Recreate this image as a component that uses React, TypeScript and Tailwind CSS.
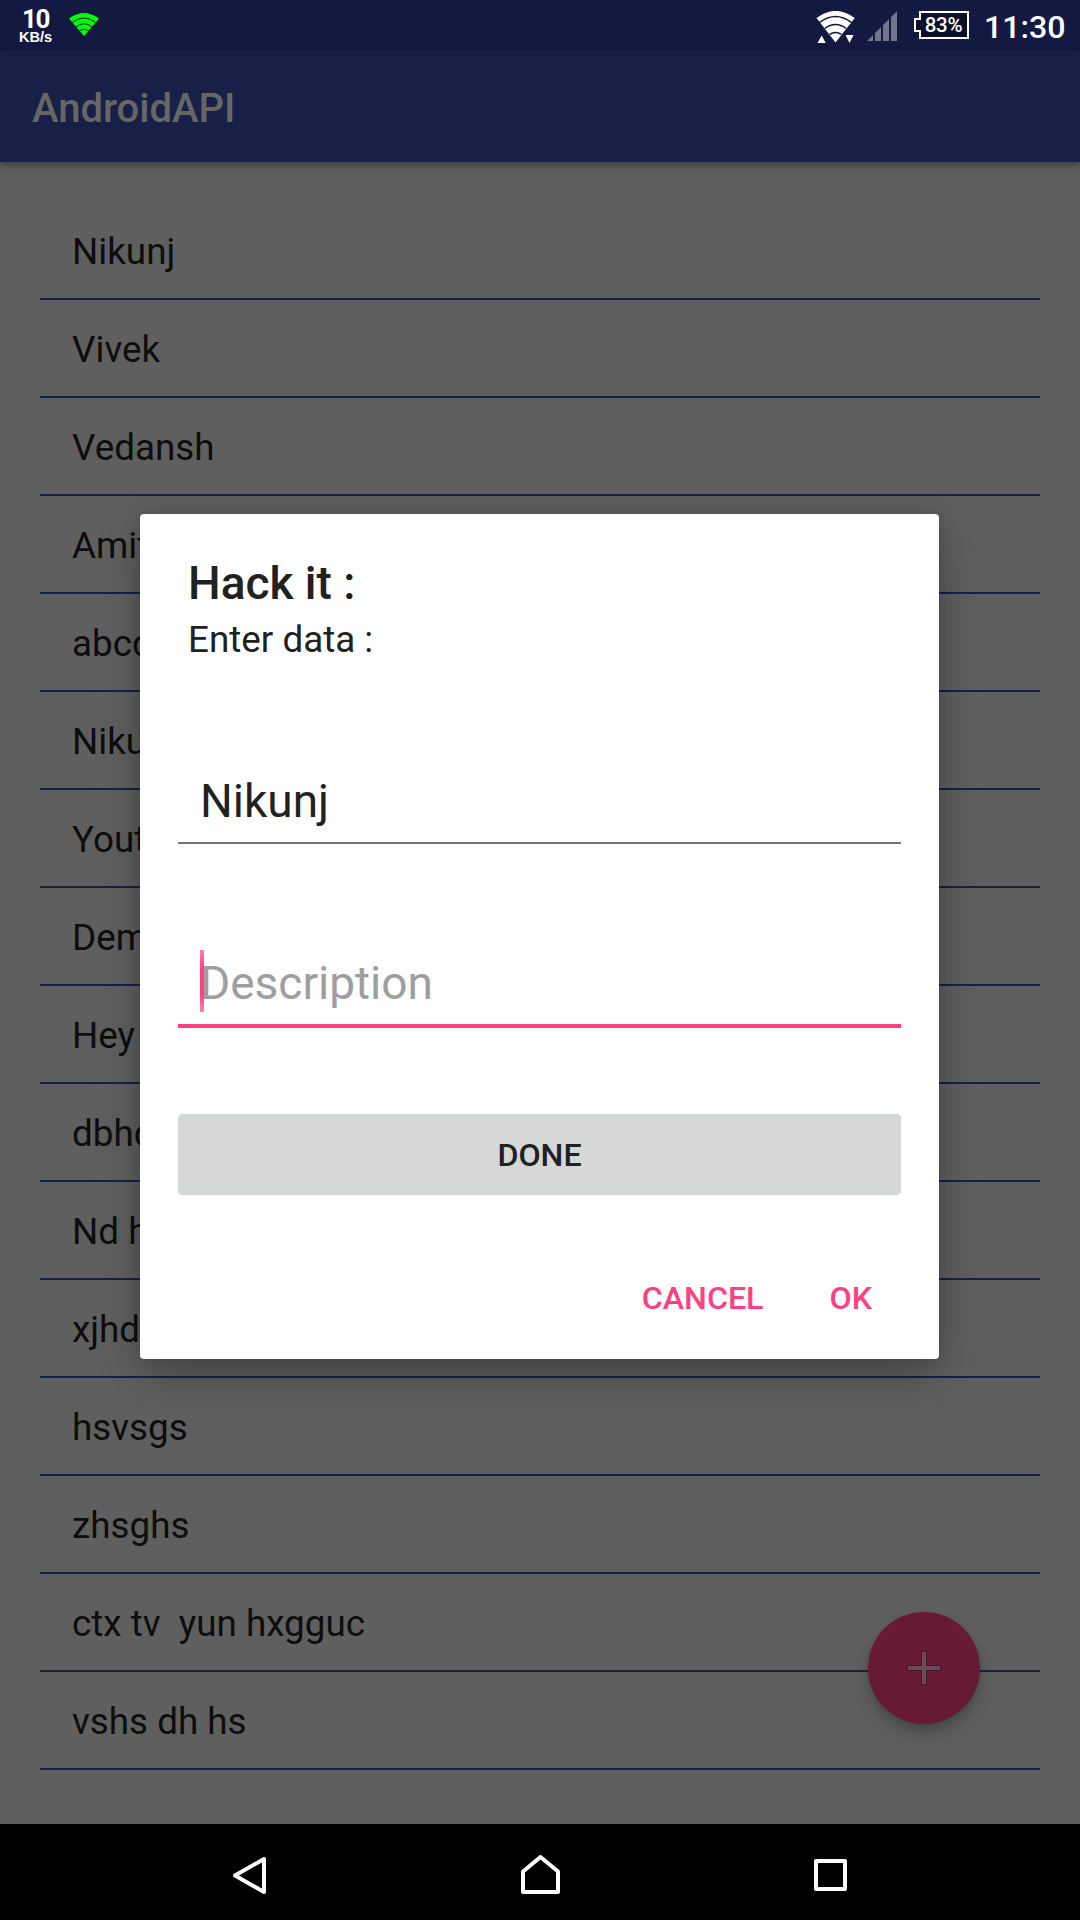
const names = [
  "Nikunj", "Vivek", "Vedansh", "Amit", "abcd", "Nikunj", "Youth", "Demo",
  "Hey", "dbhdh", "Nd hd", "xjhdh", "hsvsgs", "zhsghs", "ctx tv\u00a0 yun hxgguc", "vshs dh hs",
];

function StatusBar() {
  return (
    <header className="flex h-[50px] items-start justify-between bg-[#131940] text-white">
      <div className="flex items-start">
        <div className="ml-[18px] flex w-[35px] flex-col items-center font-['Roboto'] font-bold">
          <span className="mt-[8px] h-[22px] text-[26px] leading-[22px] font-bold tracking-[-1.5px]">10</span>
          <span className="h-[14px] font-['Liberation_Sans'] text-[14.6px] leading-[14px]">KB/s</span>
        </div>
        <svg className="mt-[13px] ml-[16px]" width="30" height="23" viewBox="0 0 30 23">
          <path d="M0 5.5Q15-5.5 30 5.5L15 23Z" fill="#00ff00" />
          <path d="M3.4 9.3Q15 .8 26.6 9.3M7 13.7Q15 7.8 23 13.7M10.5 17.8Q15 14.7 19.5 17.8" fill="none" stroke="#131940" strokeWidth="1" />
        </svg>
      </div>
      <div className="flex items-start">
        <svg className="mt-[11px]" width="40" height="32" viewBox="0 0 40 32" fill="#fff">
          <path d="M.5 7.1Q19.5-7.3 38.8 7.1L19.5 31.5Z" />
          <path d="M3.6 11.3Q19.5-.4 35.4 11.3M8.8 17.5Q19.5 9.7 30.2 17.5M13.6 23.4Q19.5 19.4 25.4 23.4" fill="none" stroke="#131940" strokeWidth="1.5" />
          <path d="M1.5 32 5.7 24.5 9.7 32ZM29.5 24H37.5L33.5 32Z" />
        </svg>
        <svg className="mt-[11px] ml-[10px]" width="31" height="31" viewBox="0 0 31 31" fill="#71758c">
          <path d="M1 30 7 24V30ZM9 22 15 16V30H9ZM17 14 23 8V30H17ZM25 6 31 0V30H25Z" />
        </svg>
        <div className="relative mt-[11px] ml-[17px] h-[28px] w-[55px]">
          <svg width="55" height="28" viewBox="0 0 55 28">
            <path d="M6 1H54V27H6V20H1V8H6Z" fill="#0b0f29" stroke="#fff" strokeWidth="2" />
          </svg>
          <span className="absolute inset-0 pl-[4px] text-center text-[20.5px] leading-[28px] font-medium tracking-[-0.3px]">83%</span>
        </div>
        <div className="mt-[8px] ml-[15px] w-[96px] text-[32.2px] leading-[38px] font-medium whitespace-nowrap">11:30</div>
      </div>
    </header>
  );
}

function Dialog() {
  return (
    <section className="absolute top-[514px] left-[140px] flex h-[845px] w-[799px] flex-col rounded-[4px] bg-white px-[38px] pt-[41px] text-[#212121] shadow-[0_16px_44px_rgba(0,0,0,0.28),0_0_16px_rgba(0,0,0,0.1)]">
      <h2 className="pl-[10px] text-[46px] leading-[56px] font-medium">Hack it :</h2>
      <p className="pl-[10px] text-[36.8px] leading-[58px]">Enter data :</p>
      <div className="mt-[102px] h-[73px] w-[723px] border-b-2 border-[#757575] pl-[22px] text-[46px] leading-[60px]">Nikunj</div>
      <div className="relative mt-[108px] h-[76px] w-[723px] border-b-4 border-[#ff4081] pl-[22px] text-[46px] leading-[62px] text-[#9e9e9e]">
        Description
        <span className="absolute top-[-2px] left-[22px] h-[62px] w-[4px] bg-[linear-gradient(#ff80ab,#ff4081_30%,#ff4081_70%,#ff80ab)]" />
      </div>
      <button className="mt-[86px] h-[81px] w-[723px] rounded-[5px] bg-[#d6d8d7] pt-px text-[32.2px] leading-[80px] font-medium shadow-[0_0_1px_rgba(0,0,0,0.25)]">DONE</button>
      <div className="mt-[65px] flex justify-end pr-[29px] text-[32.2px] leading-[76px] font-medium text-[#ff4081]">
        <button>CANCEL</button>
        <button className="ml-[66px]">OK</button>
      </div>
    </section>
  );
}

export default function App() {
  return (
    <div className="relative flex h-[1920px] w-[1080px] flex-col overflow-hidden bg-[#5f5f5f] font-['Roboto',sans-serif]">
      <StatusBar />
      <div className="h-[112px] bg-[#192048] pt-[2px] pl-[32px] text-[40px] leading-[114px] font-medium text-[#666666] shadow-[0_3px_8px_rgba(0,0,0,0.35)]">AndroidAPI</div>
      <main className="flex-1 px-[40px] pt-[40px]">
        <ul>
          {names.map((n, i) => (
            <li key={i} className="h-[98px] border-b-2 border-[#192048] pl-[32px] text-[36.8px] leading-[100px] text-[#0d0d0d]">{n}</li>
          ))}
        </ul>
      </main>
      <button className="absolute top-[1612px] left-[868px] flex size-[112px] items-center justify-center rounded-full bg-[#661a33] shadow-[0_10px_16px_rgba(0,0,0,0.22),0_1px_5px_rgba(0,0,0,0.12)]">
        <svg width="34" height="34" viewBox="0 0 34 34">
          <path d="M14.5.5h5v14h14v5h-14v14h-5v-14H.5v-5h14Z" fill="#6c4a58" stroke="#42172a" />
        </svg>
      </button>
      <Dialog />
      <nav className="flex h-[96px] items-start bg-black">
        <svg className="mt-[32px] ml-[232px]" width="36" height="40" viewBox="0 0 36 40" fill="none" stroke="#fff" strokeWidth="4" strokeLinejoin="round">
          <path d="M32 3V36L3 19.5Z" />
        </svg>
        <svg className="mt-[30px] ml-[252px]" width="42" height="42" viewBox="0 0 42 42" fill="none" stroke="#fff" strokeWidth="4" strokeLinejoin="round">
          <path d="M3 38V17.5L20.5 3 38 17.5V38Z" />
        </svg>
        <svg className="mt-[34px] ml-[251px]" width="36" height="36" viewBox="0 0 36 36" fill="none" stroke="#fff" strokeWidth="4" strokeLinejoin="round">
          <path d="M3 3H32V31H3Z" />
        </svg>
      </nav>
    </div>
  );
}
